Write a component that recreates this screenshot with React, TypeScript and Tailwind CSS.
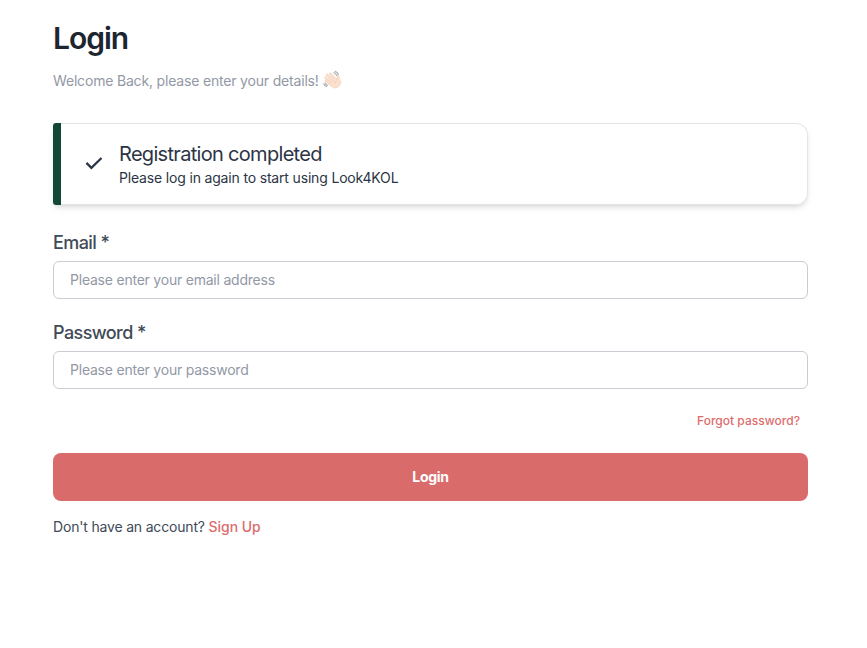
import React from 'react';

function WavingHand() {
  return (
    <svg className="-mt-1 h-[19px] w-[19px]" viewBox="0 0 19 19" fill="none" strokeLinecap="round" aria-hidden="true">
      <g stroke="#b5b5b7" strokeWidth="1.3">
        <path d="M12.2 1.4c1.6.5 2.7 1.8 3.1 3.6" />
        <path d="M10.9 2.7c1.5.4 2.3 1.3 2.7 2.8" />
        <path d="M.8 13.8c.4 1.3 1.3 2.3 2.7 2.8" />
        <path d="M2.4 13.2c.3 1 1 1.7 2 2.2" />
      </g>
      <g stroke="#ecc8b0" strokeWidth="2.3">
        <path d="m3.2 10.8 5 4" />
        <path d="m2.6 7.8 6.4 5" />
        <path d="m4 4.8 7 6" />
        <path d="m7.4 3.7 5.6 6.1" />
      </g>
      <g stroke="#fae0cd" strokeWidth="1.8">
        <path d="m3.4 10.7 6 4.2" />
        <path d="m2.8 7.7 7.6 5.1" />
        <path d="m4.2 4.7 7.6 6.1" />
        <path d="m7.6 3.6 6 6.4" />
      </g>
      <path d="M13.6 9.7c.6-1.4 0-3.2 1-4.3.8-.9 1.9-.3 1.9.7 0 1.5 1.2 3.2 1.3 5.1.2 3.3-2.3 6.5-5.6 6.6-2 0-3.7-1.1-5.2-2.7l5.2-6.9Z" fill="#fae0cd" />
      <path d="M14.3 6.4c-.3 1.6.1 2.5-.7 3.7-1 .9-1.8 1.7-1.7 3.2M17.9 11.4c.1 3.3-2.4 6.4-5.7 6.5-1.7 0-3.3-.8-4.6-2.2" stroke="#e6bea4" strokeWidth=".5" />
    </svg>
  );
}

function Field({ id, label, type, placeholder }: { id: string; label: string; type: string; placeholder: string }) {
  return (
    <div>
      <label htmlFor={id} className="block text-lg leading-7 font-medium tracking-[-0.58px] text-[#414a57]">{label} *</label>
      <input
        id={id}
        type={type}
        placeholder={placeholder}
        className="mt-1 block h-[38px] w-full rounded-[6px] border border-[#cbccd3] bg-white px-4 pb-0.5 text-sm tracking-[-0.22px] text-[#374151] outline-none placeholder:text-[#9298a6]"
      />
    </div>
  );
}

export default function App() {
  return (
    <main className="min-h-screen bg-white pt-[18px] pr-[59px] pl-[53px] font-['Inter',sans-serif] text-sm">
      <h1 className="text-[30px] leading-10 font-semibold tracking-[-1px] text-[#1c2530]">Login</h1>
      <p className="mt-[13px] flex h-5 items-center gap-1 tracking-[-0.18px] text-[#9298a6]">
        Welcome Back, please enter your details!
        <WavingHand />
      </p>
      <section className="mt-8 flex h-[82px] rounded-l-[4px] rounded-r-xl bg-white text-[#2b3545] shadow-md">
        <div className="w-2 shrink-0 rounded-l-[3px] bg-[#104735]" />
        <div className="flex flex-1 items-center rounded-r-xl border border-l-0 border-[#e5e5e6]">
          <svg className="ml-6 h-[18px] w-[18px] shrink-0" viewBox="0 0 18 18" fill="none" stroke="currentColor" strokeWidth="2.2" aria-hidden="true">
            <path d="m1.4 7.9 5 5L16.5 3" />
          </svg>
          <div className="ml-4">
            <h2 className="text-xl leading-7 tracking-[-0.69px]">Registration completed</h2>
            <p className="leading-5 tracking-[-0.17px]">Please log in again to start using Look4KOL</p>
          </div>
        </div>
      </section>
      <form className="mt-6" onSubmit={(event) => event.preventDefault()}>
        <div className="flex flex-col gap-5">
          <Field id="email" label="Email" type="email" placeholder="Please enter your email address" />
          <Field id="password" label="Password" type="password" placeholder="Please enter your password" />
        </div>
        <div className="mt-6 flex justify-end pr-2">
          <a href="#" className="text-xs leading-4 font-medium tracking-[0.02px] text-[#dc6c6c]">Forgot password?</a>
        </div>
        <button type="submit" className="mt-6 block h-12 w-full rounded-lg bg-[#da6b6b] text-sm font-bold tracking-[-0.3px] text-white">Login</button>
      </form>
      <p className="mt-4 leading-5 tracking-[-0.18px] text-[#414a57]">
        Don't have an account? <a href="#" className="font-medium tracking-[-0.05px] text-[#dc6c6c]">Sign Up</a>
      </p>
    </main>
  );
}
